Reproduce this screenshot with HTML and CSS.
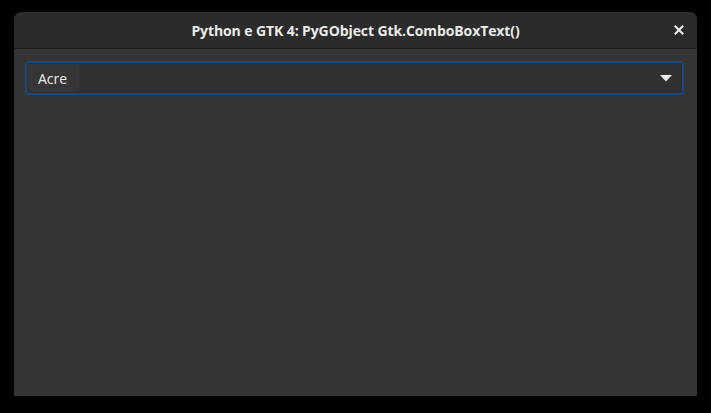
FILE: index.html
```html
<!DOCTYPE html>
<html>
<head>
<meta charset="utf-8">
<link rel="stylesheet" href="styles.css">
</head>
<body>
<div class="window">
  <header class="titlebar">
    <span class="title">Python e GTK 4: PyGObject Gtk.ComboBoxText()</span>
    <button class="close" aria-label="Close">
      <svg width="10" height="10" viewBox="0 0 10 10"><path d="M1.5 1.5 L8.5 8.5 M8.5 1.5 L1.5 8.5" stroke="#eeeeec" stroke-width="2" stroke-linecap="square"/></svg>
    </button>
  </header>
  <main class="content">
    <div class="combo">
      <span class="combo-label">Acre</span>
      <svg class="arrow" width="12" height="7" viewBox="0 0 12 7"><path d="M0 0 L12 0 L6 6.5 Z" fill="#eeeeec"/></svg>
    </div>
  </main>
</div>
</body>
</html>
```
FILE: styles.css
```css
html, body {
  margin: 0;
  padding: 0;
  background: #000;
  width: 711px;
  height: 413px;
  overflow: hidden;
}
body {
  padding: 12px 14px 17px 14px;
  box-sizing: border-box;
  font-family: "Open Sans", "Noto Sans", sans-serif;
}
.window {
  width: 683px;
  height: 384px;
  display: flex;
  flex-direction: column;
  border-radius: 8px 8px 0 0;
  overflow: hidden;
  background: #353535;
}
.titlebar {
  height: 36px;
  flex: 0 0 36px;
  background: #2b2b2b;
  border-bottom: 1px solid #1b1b1b;
  display: flex;
  align-items: center;
  justify-content: center;
  position: relative;
}
.title {
  color: #eeeeec;
  font-weight: 700;
  font-size: 14px;
  letter-spacing: -0.1px;
}
.close {
  position: absolute;
  right: 12px;
  top: 12px;
  width: 12px;
  height: 12px;
  padding: 0;
  border: 0;
  background: transparent;
  display: flex;
  align-items: center;
  justify-content: center;
}
.content {
  flex: 1;
  padding: 12px 13px 0 11px;
  background: #353535;
}
.combo {
  height: 34px;
  box-sizing: border-box;
  border: 1px solid #1c4677;
  box-shadow: inset 0 0 0 1px #1a4a80;
  border-radius: 3px;
  background: #303030;
  display: flex;
  align-items: center;
  justify-content: space-between;
  padding: 0 11px 0 2px;
}
.combo-label {
  color: #eeeeec;
  font-size: 14px;
  background: #363636;
  align-self: stretch;
  display: flex;
  align-items: center;
  padding: 0 12px 0 10px;
  margin: 2px 0;
}
.arrow {
  display: block;
}
```
